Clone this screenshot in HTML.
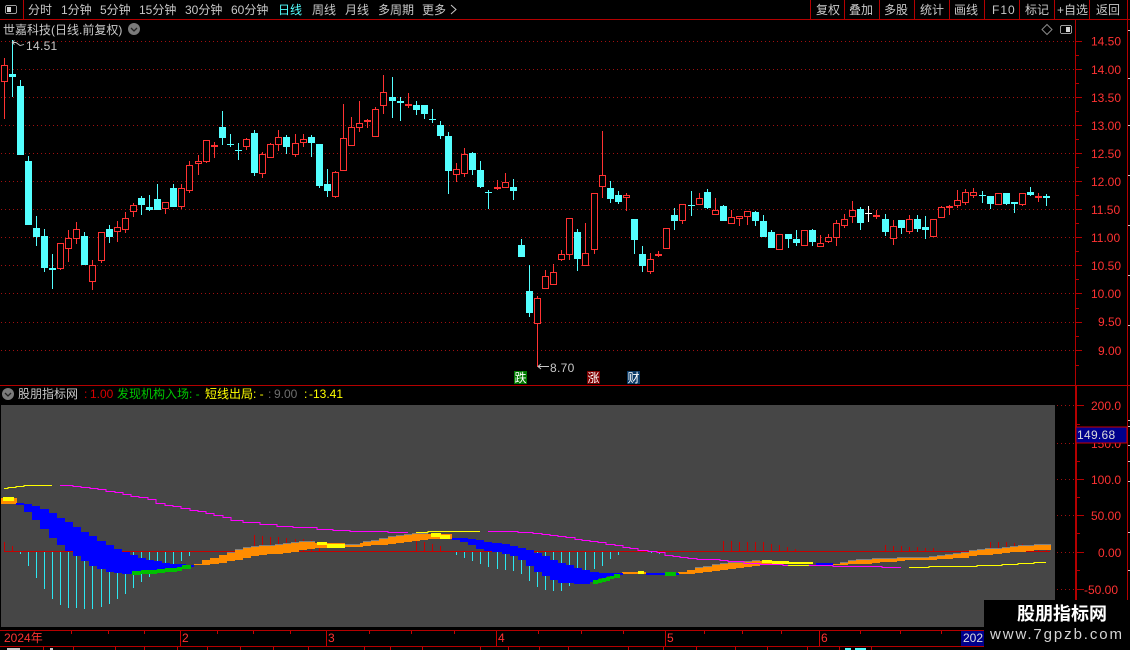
<!DOCTYPE html>
<html><head><meta charset="utf-8"><title>股朋指标网</title>
<style>
html,body{margin:0;padding:0;background:#000;width:1130px;height:650px;overflow:hidden}
svg{display:block;position:absolute;left:0;top:0}
text{font-family:"Liberation Sans","WenQuanYi Zen Hei","Noto Sans CJK SC",sans-serif;font-size:12px}
.s{shape-rendering:crispEdges}
.h text{fill:#c8c8c8}
.a text{fill:#ff3232}
</style></head>
<body>
<svg width="1130" height="650" viewBox="0 0 1130 650" xmlns="http://www.w3.org/2000/svg">
<defs><pattern id="d" x="0" y="0" width="4" height="1" patternUnits="userSpaceOnUse"><rect x="1" y="0" width="1" height="1" fill="#a01010"/></pattern></defs>
<!-- grid and frame -->
<g class="s" fill="url(#d)">
<rect x="0" y="41" width="1075" height="1"/><rect x="0" y="69" width="1075" height="1"/><rect x="0" y="97" width="1075" height="1"/><rect x="0" y="125" width="1075" height="1"/><rect x="0" y="153" width="1075" height="1"/><rect x="0" y="181" width="1075" height="1"/><rect x="0" y="209" width="1075" height="1"/><rect x="0" y="237" width="1075" height="1"/><rect x="0" y="265" width="1075" height="1"/><rect x="0" y="293" width="1075" height="1"/><rect x="0" y="322" width="1075" height="1"/><rect x="0" y="350" width="1075" height="1"/>
<rect x="1057" y="405" width="18" height="1"/><rect x="1057" y="443" width="18" height="1"/><rect x="1057" y="479" width="18" height="1"/><rect x="1057" y="515" width="18" height="1"/><rect x="1057" y="552" width="18" height="1"/><rect x="1057" y="589" width="18" height="1"/>
</g>
<g class="s" fill="none">
<path stroke="#b40000" d="M0 19.5H1130M23.5 0V19M810.5 0V19M844.5 0V19M879.5 0V19M914.5 0V19M949.5 0V19M984.5 0V19M1019.5 0V19M1054.5 0V19M1089.5 0V19M1127.5 0V600M0 385.5H1130M1075.5 20V630M1076.5 386V630M0 630.5H984M0 646.5H984"/>
<path stroke="#b40000" d="M1075 41.5H1082M1075 69.5H1082M1075 97.5H1082M1075 125.5H1082M1075 153.5H1082M1075 181.5H1082M1075 209.5H1082M1075 237.5H1082M1075 265.5H1082M1075 293.5H1082M1075 322.5H1082M1075 350.5H1082M1075 55.5H1079M1075 83.5H1079M1075 111.5H1079M1075 139.5H1079M1075 167.5H1079M1075 195.5H1079M1075 223.5H1079M1075 251.5H1079M1075 279.5H1079M1075 308.5H1079M1075 336.5H1079M1075 365.5H1079"/>
<path stroke="#b40000" d="M1076 405.5H1084M1076 479.5H1084M1076 515.5H1084M1076 552.5H1084M1076 589.5H1084M1076 461.5H1080M1076 497.5H1080M1076 533.5H1080M1076 570.5H1080M1076 607.5H1080M1076 424.5H1080"/>
<path stroke="#c8c8c8" d="M1128 30.5H1130M1128 78.5H1130M1128 125.5H1130M1128 175.5H1130M1128 225.5H1130M1128 275.5H1130M1128 325.5H1130M1128 420.5H1130M1128 426.5H1130M1128 445.5H1130M1128 461.5H1130M1128 481.5H1130M1128 532.5H1130M1128 570.5H1130"/>
</g>
<!-- top menu -->
<g class="s"><rect x="5.5" y="5.500" width="11" height="8" rx="1.500" fill="none" stroke="#9a9a9a"/><rect x="7" y="7" width="4" height="5" fill="#d8d8d8"/></g>
<g class="h">
<text x="28" y="14">分时</text>
<text x="61" y="14">1分钟</text>
<text x="100" y="14">5分钟</text>
<text x="139" y="14">15分钟</text>
<text x="185" y="14">30分钟</text>
<text x="231" y="14">60分钟</text>
<text x="278" y="14" style="fill:#54ffff">日线</text>
<text x="312" y="14">周线</text>
<text x="345" y="14">月线</text>
<text x="378" y="14">多周期</text>
<text x="422" y="14">更多</text>
<text x="816" y="14">复权</text>
<text x="849" y="14">叠加</text>
<text x="884" y="14">多股</text>
<text x="920" y="14">统计</text>
<text x="954" y="14">画线</text>
<text x="992" y="14" letter-spacing="1">F10</text>
<text x="1025" y="14">标记</text>
<text x="1057" y="14">+自选</text>
<text x="1096" y="14">返回</text>
<text x="3" y="34">世嘉科技(日线.前复权)</text>
<text x="26" y="50" letter-spacing=".3">14.51</text>
<text x="550" y="372" letter-spacing=".3">8.70</text>
<text x="18" y="398">股朋指标网</text>
</g>
<path d="M451 5l5 4.500-5 4.500" fill="none" stroke="#c8c8c8"/>
<circle cx="134" cy="29" r="6" fill="#7a7a7a"/><path d="M131 28l3 3 3-3" fill="none" stroke="#222" stroke-width="1.3"/>
<path d="M1047 24.500l5 5-5 5-5-5z" fill="none" stroke="#8a8a8a"/>
<g class="s"><rect x="1060.500" y="25.500" width="11" height="8" rx="1.500" fill="none" stroke="#9a9a9a"/><rect x="1066" y="27" width="4" height="5" fill="#d8d8d8"/></g>
<!-- price axis -->
<g class="a">
<text x="1091" y="45.500">14.50</text><text x="1091" y="74">14.00</text><text x="1091" y="102">13.50</text><text x="1091" y="130">13.00</text><text x="1091" y="158">12.50</text><text x="1091" y="186">12.00</text><text x="1091" y="214">11.50</text><text x="1091" y="242">11.00</text><text x="1091" y="270">10.50</text><text x="1091" y="298">10.00</text><text x="1098" y="326">9.50</text><text x="1098" y="355">9.00</text>
<text x="1091" y="410">200.0</text><text x="1091" y="448">150.0</text><text x="1091" y="484">100.0</text><text x="1091" y="520">50.00</text><text x="1098" y="557">0.00</text><text x="1084" y="594">-50.00</text>
</g>
<!-- candles: wicks -->
<path class="s" fill="none" stroke="#54ffff" d="M12.5 40V97M20.5 80V155M28.5 156V225M36.5 216V246M44.5 229V272M52.5 254V289M84.500 232V265M109.5 225V243M141.5 196V215M149.5 195V211M157.5 184V210M173.5 184V207M222.5 111V145M230.5 134V147M238.5 143V160M254.5 130V176M286.5 135V154M311.5 135V157M319.5 144V188M327.5 169V197M392.5 77V118M400.5 97V121M416.5 101V115M424.5 105V119M432.5 109V123M440.5 121V139M448.5 132V194M472.5 152V175M480.5 161V188M488.5 190V209M513.5 179V200M521.5 239V257M529.5 265V317M577.5 229V271M610.5 181V203M618.5 191V204M634.5 219V254M642.5 246V272M674.5 208V230M691.5 191V216M707.5 189V209M723.5 205V221M755.5 211V226M763.5 215V237M771.5 230V248M788.5 234V248M796.5 230V246M812.5 229V246M860.5 207V230M885.5 214V236M901.5 220V234M917.5 215V232M925.5 216V239M982.5 191V203M990.5 196V209M1006.5 193V205M1014.5 202V213M1030.5 187V196M1046.5 194V206"/>
<path class="s" fill="none" stroke="#ff3232" d="M4.5 58V119M60.5 243V270M68.5 230V262M76.5 222V244M92.5 260V290M101.5 232V263M117.5 221V242M125.5 212V233M133.5 203V217M165.5 202V214M181.5 184V209M189.5 161V193M198.5 155V175M206.5 140V163M214.5 142V158M246.5 138V150M262.5 152V178M270.5 143V158M278.5 130V151M295.5 134V157M303.5 134V147M335.5 171V198M343.5 104V171M351.5 117V146M359.5 101V132M367.5 119V128M375.5 107V137M383.5 75V114M408.5 93V108M456.5 163V182M464.5 148V177M497.5 180V190M505.5 173V188M537.5 296V367M545.5 270V289M553.5 264V285M561.5 250V261M569.5 218V260M585.5 223V266M594.5 193V254M602.5 131V198M626.5 193V211M650.5 253V274M658.5 251V257M666.5 228V249M682.5 204V224M699.5 193V205M715.5 198V215M731.5 210V224M739.5 216V226M747.5 211V225M779.5 234V250M804.5 230V246M820.5 235V247M828.5 234V243M836.5 220V246M844.5 214V228M852.5 201V223M876.5 210V219M893.5 220V245M909.5 215V234M933.5 219V237M941.5 206V218M949.5 205V215M957.5 190V208M965.5 189V205M973.5 188V198M998.5 193V205M1022.5 193V206M1038.5 193V202"/>
<path class="s" fill="none" stroke="#ffffff" d="M868.5 206V222"/>
<path class="s" fill="none" stroke="#ffffff" stroke-width="7" d="M868.5 213V214"/>
<!-- cyan bodies -->
<path class="s" fill="none" stroke="#54ffff" stroke-width="7" d="M12.5 74V77M20.5 86V155M28.5 161V225M36.5 228V237M44.5 236V268M52.5 268V270M84.5 236V265M109.5 229V237M141.5 198V205M149.5 207V210M157.5 199V210M173.5 188V207M222.5 127V138M230.5 144V145M238.5 150V151M254.5 133V173M286.5 137V147M311.5 137V143M319.5 144V186M327.5 184V191M392.5 97V101M400.5 101V103M416.5 105V110M424.5 105V114M432.5 119V120M440.5 125V136M448.5 136V171M472.5 153V170M480.5 170V187M488.5 192V193M513.5 187V191M521.5 245V257M529.5 291V313M577.5 232V259M610.5 188V199M618.5 195V202M634.5 219V240M642.5 254V266M674.5 215V221M691.5 205V206M707.5 192V208M723.5 206V221M755.5 212V221M763.5 221V237M771.5 232V248M788.5 234V239M796.5 239V243M812.5 230V242M860.5 209V223M885.5 219V232M901.5 220V228M917.5 219V229M925.5 227V230M982.5 195V196M990.5 196V204M1006.5 193V204M1014.5 202V204M1030.5 192V195M1046.5 196V198"/>
<!-- red bodies outer -->
<path class="s" fill="none" stroke="#ff3232" stroke-width="7" d="M4.5 65V82M60.5 243V269M68.5 238V249M76.5 229V239M92.5 265V282M101.5 232V261M117.5 227V232M125.5 218V230M133.5 205V212M165.5 202V209M181.5 188V207M189.5 165V191M198.5 161V164M206.5 140V162M214.5 145V147M246.5 139V147M262.5 154V174M270.5 144V158M278.5 137V145M295.5 143V155M303.5 139V143M335.5 172V197M343.5 138V171M351.5 127V146M359.5 123V128M367.5 120V122M375.5 109V137M383.5 92V106M408.5 104V106M456.5 169V175M464.5 154V174M497.5 187V189M505.5 182V188M537.5 298V324M545.5 276V289M553.5 272V285M561.5 254V260M569.5 218V255M585.5 253V266M594.5 193V250M602.5 175V187M626.5 195V198M650.5 259V272M658.5 254V256M666.5 228V249M682.5 204V221M699.5 198V205M715.5 210V215M731.5 217V224M739.5 216V219M747.5 211V217M779.5 234V250M804.5 230V246M820.5 243V247M828.5 237V242M836.5 223V238M844.5 219V226M852.5 210V217M876.5 215V217M893.5 226V239M909.5 219V232M933.5 219V237M941.5 207V218M949.5 206V208M957.5 200V206M965.5 192V203M973.5 192V196M998.5 193V205M1022.5 193V205M1038.5 196V198"/>
<!-- red bodies hollow inner -->
<path class="s" fill="none" stroke="#000" stroke-width="5" d="M4.5 66V81M60.5 244V268M68.5 239V248M76.5 230V238M92.5 266V281M101.5 233V260M117.5 228V231M125.5 219V229M133.5 206V211M165.5 203V208M181.5 189V206M189.5 166V190M198.5 162V163M206.5 141V161M246.5 140V146M262.5 155V173M270.5 145V157M278.5 138V144M295.5 144V154M303.5 140V142M335.5 173V196M343.5 139V170M351.5 128V145M359.5 124V127M375.5 110V136M383.5 93V105M456.5 170V174M464.5 155V173M505.5 183V187M537.5 299V323M545.5 277V288M553.5 273V284M561.5 255V259M569.5 219V254M585.5 254V265M594.5 194V249M602.5 176V186M626.5 196V197M650.5 260V271M666.5 229V248M682.5 205V220M699.5 199V204M715.5 211V214M731.5 218V223M739.5 217V218M747.5 212V216M779.5 235V249M804.5 231V245M820.5 244V246M828.5 238V241M836.5 224V237M844.5 220V225M852.5 211V216M893.5 227V238M909.5 220V231M933.5 220V236M941.5 208V217M957.5 201V205M965.5 193V202M973.5 193V195M998.5 194V204M1022.5 194V204"/>
<!-- high/low markers -->
<path d="M12 42.500l2.500-2M12 42.500l2.500 2M12 42.500h4l4 3 4-1" fill="none" stroke="#c8c8c8" stroke-width=".9"/>
<path d="M538 366.500h11M538 366.500l3-2.500M538 366.500l3 2.500" fill="none" stroke="#c8c8c8"/>
<g class="s"><rect x="514" y="371" width="13" height="13" fill="#007a00"/><rect x="587" y="371" width="13" height="13" fill="#7d0000"/><rect x="627" y="371" width="13" height="13" fill="#0a3a66"/></g>
<text x="514.500" y="382" fill="#fff">跌</text><text x="587.500" y="382" fill="#fff">涨</text><text x="627.500" y="382" fill="#fff">财</text>
<!-- lower panel -->
<circle cx="8" cy="394" r="6" fill="#7a7a7a"/><path d="M5 393l3 3 3-3" fill="none" stroke="#222" stroke-width="1.3"/>
<text x="84" y="398" fill="#d80000">:</text><text x="90" y="398" fill="#d80000">1.00</text>
<text x="117" y="398" fill="#00c800">发现机构入场:<tspan fill="#00c800"> -</tspan></text>
<text x="205" y="398" fill="#ffff00">短线出局:<tspan> -</tspan></text>
<text x="268" y="398" fill="#6e6e6e">:</text><text x="274" y="398" fill="#6e6e6e">9.00</text>
<text x="304" y="398" fill="#ffff00">:</text><text x="309" y="398" fill="#ffff00">-13.41</text>
<rect class="s" x="1" y="405" width="1054" height="222" fill="#464646"/>
<g class="s">
<rect x="1076" y="427" width="51" height="16" fill="#00008c" stroke="#c80000"/>
</g>
<text x="1077" y="439" fill="#dcdcdc" letter-spacing=".3">149.68</text>
<!-- zero line and histogram -->
<g class="s" fill="none">
<path stroke="#c80000" d="M4 551.500H1050"/>
<path stroke="#c80000" d="M4.500 542V551M12.500 546V551M254.500 535V551M262.500 536V551M270.500 537V551M278.500 537V551M286.500 538V551M295.500 539V551M303.500 539V551M311.500 540V551M319.500 544V551M416.500 541V551M424.500 542V551M432.500 544V551M440.500 546V551M723.500 541V551M731.500 541V551M739.500 542V551M747.500 542V551M755.500 542V551M763.500 542V551M771.500 544V551M779.500 545V551M787.500 547V551M795.500 549V551M885.500 545V551M893.500 546V551M901.500 546V551M909.500 547V551M917.500 547V551M925.500 548V551M933.500 548V551M990.500 542V551M998.500 542V551M1006.500 542V551M1014.500 543V551M1022.500 544V551M1030.500 545V551M1038.500 545V551M1046.500 546V551"/>
<path stroke="#2ce6f0" d="M20.500 552V554M28.500 552V566M36.500 552V578M44.500 552V589M52.500 552V599M60.500 552V605M68.500 552V608M76.500 552V608M84.500 552V609M92.500 552V609M101.500 552V607M109.500 552V604M117.500 552V599M125.500 552V594M133.500 552V588M141.500 552V582M149.500 552V577M157.500 552V571M165.500 552V567M173.500 552V564M181.500 552V561M189.500 552V556M456.500 552V555M464.500 552V558M472.500 552V561M480.500 552V564M488.500 552V567M497.500 552V569M505.500 552V570M513.500 552V571M521.500 552V574M529.500 552V581M537.500 552V587M545.500 552V590M553.500 552V591M561.500 552V591M569.500 552V586M577.500 552V580M585.500 552V574M594.500 552V569M602.500 552V566M610.500 552V559M618.500 552V555M651.500 552V553M659.500 552V554"/>
</g>
<!-- ribbon: orange -->
<path class="s" fill="#ff8c00" d="M1 498H17V504H1z
M194 564H202V565H194zM202 560H210V565H202zM210 558H219V564H210zM219 555H227V563H219zM227 553H235V561H227zM235 550H243V560H235zM243 548H251V558H243zM251 547H259V556H251zM259 546H267V555H259zM267 546H275V554H267zM275 545H283V554H275zM283 544H291V553H283zM291 543H299V552H291zM299 542H307V550H299zM307 542H315V549H307zM315 543H345V548H315zM345 545H360V547H345z
M360 543H363V547H360zM363 542H371V546H363zM371 541H379V545H371zM379 539H388V545H379zM388 537H396V544H388zM396 536H404V543H396zM404 535H412V542H404zM412 534H420V541H412zM420 534H428V540H420zM428 534H452V539H428z
M622 572H646V574H622z
M678 572H687V574H678zM687 570H695V574H687zM695 568H703V573H695zM703 567H712V572H703zM712 565H720V571H712zM720 564H728V570H720zM728 563H736V569H728zM736 563H744V568H736zM744 562H752V567H744zM752 561H760V566H752zM760 561H783V565H760zM783 562H813V564H783z
M833 564H840V565H833zM840 563H848V565H840zM848 561H856V564H848zM856 560H864V564H856zM864 560H872V564H864zM872 559H880V563H872zM880 559H888V562H880zM888 559H897V562H888zM897 558H905V561H897zM905 558H913V560H905zM913 558H929V560H913zM929 557H937V560H929zM937 556H945V559H937zM945 555H953V559H945zM953 554H961V558H953zM961 553H969V558H961zM969 551H977V556H969zM977 550H985V555H977zM985 549H993V555H985zM993 549H1002V554H993zM1002 548H1010V553H1002zM1010 547H1018V552H1010zM1018 546H1026V552H1018zM1026 546H1034V551H1026zM1034 545H1042V550H1034zM1042 545H1051V550H1042z"/>
<!-- grey edge -->
<path class="s" fill="none" stroke="#808080" d="M227 552.500H235M235 549.500H243M243 547.500H251M251 546.500H259M259 545.500H275M275 544.500H283M283 543.500H291M291 542.500H299M299 541.500H315M345 544.500H360M363 541.500H371M371 540.500H379M379 538.500H388M388 536.500H396M396 535.500H404M404 534.500H412M412 533.500H428M695 567.500H703M703 566.500H712M712 564.500H720M720 563.500H728M728 562.500H744M744 561.500H752M752 560.500H760M840 562.500H848M848 560.500H856M856 559.500H872M872 558.500H897M897 557.500H929M929 556.500H937M937 555.500H945M945 554.500H953M953 553.500H961M961 552.500H969M969 550.500H977M977 549.500H985M985 548.500H1002M1002 547.500H1010M1010 546.500H1018M1018 545.500H1034M1034 544.500H1051"/>
<!-- ribbon: blue -->
<path class="s" fill="#0000ff" d="M16 503H24V505H16zM24 504H32V512H24zM32 506H40V520H32zM40 509H49V529H40zM49 513H57V538H49zM57 518H65V545H57zM65 522H73V551H65zM73 527H81V556H73zM81 532H89V561H81zM89 536H97V566H89zM97 541H106V569H97zM106 545H114V572H106zM114 549H122V573H114zM122 552H130V574H122zM130 555H138V574H130zM138 558H146V572H138zM146 560H154V572H146zM154 561H162V571H154zM162 563H170V570H162zM170 564H178V569H170zM178 564H186V567H178zM186 565H194V567H186z
M452 538H460V540H452zM460 538H468V542H460zM468 539H476V545H468zM476 540H484V549H476zM484 542H492V551H484zM492 543H502V552H492zM502 544H510V554H502zM510 546H518V556H510zM518 548H526V560H518zM526 550H534V566H526zM534 553H542V572H534zM542 556H550V576H542zM550 560H558V580H550zM558 563H566V583H558zM566 565H574V583H566zM574 568H582V584H574zM582 570H590V584H582zM590 572H599V582H590zM599 573H607V578H599zM607 573H615V576H607zM615 573H623V575H615z
M646 573H665V575H646zM676 573H679V575H676zM816 563H833V565H816z"/>
<!-- ribbon: green -->
<path class="s" fill="#00c000" d="M132 571H141V575H132zM141 570H149V574H141zM149 570H157V574H149zM157 569H165V573H157zM165 568H177V572H165zM177 567H182V571H177zM182 565H191V569H182z
M593 580H598V584H593zM598 579H602V583H598zM602 578H606V582H602zM606 577H610V581H606zM610 576H614V579H610zM614 574H620V578H614zM665 572H676V576H665z"/>
<!-- ribbon: yellow -->
<path class="s" fill="#ffff00" d="M3 497H14V501H3zM317 542H327V545H317zM327 544H345V548H327zM431 533H441V537H431zM440 535H450V539H440zM638 571H644V574H638zM762 560H772V563H762zM772 561H789V564H772zM789 562H813V564H789z"/>
<!-- magenta line -->
<path class="s" fill="none" stroke="#ff00ff" d="M60 485.500H73V486.500H81V487.500H90V488.500H98V489.500H106V491.500H115V492.500H123V494.500H131V496.500H139V497.500H148V499.500H156V503.500H165V505.500H173V506.500H181V508.500H190V510.500H198V511.500H206V513.500H214V515.500H223V517.500H231V520.500H243V522.500H260V524.500H277V526.500H293V527.500H317V529.500H333V530.500H350V531.500H388V532.500H408M488 531.500H518V532.500H533V533.500H542V534.500H550V535.500H558V536.500H566V537.500H575V539.500H582V540.500H590V541.500H598V542.500H606V544.500H615V545.500H623V547.500H630V548.500H638V550.500H648V551.500H657V552.500H665V555.500H673V556.500H680V557.500H688V558.500H697V559.500H720V560.500H728V561.500H744V563.500H760V564.500H783V565.500H833V566.500H882V567.500H901"/>
<path class="s" fill="none" stroke="#ffff00" d="M4 488.500H8V487.500H16V486.500H24V485.500H52M416 532.500H428V531.500H480M788 565.500H809M909 567.500H929V566.500H977V565.500H1002V564.500H1018V563.500H1034V562.500H1046"/>
<!-- bottom axis -->
<path class="s" fill="none" stroke="#c80000" d="M180.500 631V646M326.500 631V646M496.500 631V646M665.500 631V646M819.500 631V646M71.500 631V634M108.500 631V634M144.500 631V634M217.500 631V634M253.500 631V634M290.500 631V634M369.500 631V634M411.500 631V634M454.500 631V634M538.500 631V634M581.500 631V634M623.500 631V634M704.500 631V634M742.500 631V634M781.500 631V634M860.500 631V634M900.500 631V634M941.500 631V634M43.500 647V650M73.500 647V650M115.500 647V650M144.500 647V650M177.500 647V650M207.500 647V650M240.500 647V650M273.500 647V650M308.500 647V650M364.500 647V650M390.500 647V650M422.500 647V650M480.500 647V650M508.500 647V650M539.500 647V650M568.500 647V650M628.500 647V650M663.500 647V650M696.500 647V650M735.500 647V650M767.500 647V650M807.500 647V650M839.500 647V650M871.500 647V650"/>
<path class="s" fill="#c8c8c8" d="M7 648H20V650H7zM50 648H53V650H50z"/>
<path class="s" fill="#54ffff" d="M845 648H851V650H845zM855 648H866V650H855z"/>
<g class="a"><text x="4" y="642">2024年</text><text x="182" y="642">2</text><text x="328" y="642">3</text><text x="498" y="642">4</text><text x="667" y="642">5</text><text x="821" y="642">6</text></g>
<rect class="s" x="961" y="631" width="23" height="15" fill="#00008c"/>
<text x="963" y="642" fill="#dcdcdc">202</text>
<!-- watermark -->
<rect class="s" x="984" y="600" width="146" height="50" fill="#000"/>
<text x="1017" y="620" fill="#fff" font-weight="700" style="font-size:18px;font-family:'Noto Sans CJK SC','WenQuanYi Zen Hei',sans-serif">股朋指标网</text>
<text x="990" y="639" fill="#d4d4d4" letter-spacing="1.9" style="font-size:15px">www.7gpzb.com</text>
</svg>
</body></html>
